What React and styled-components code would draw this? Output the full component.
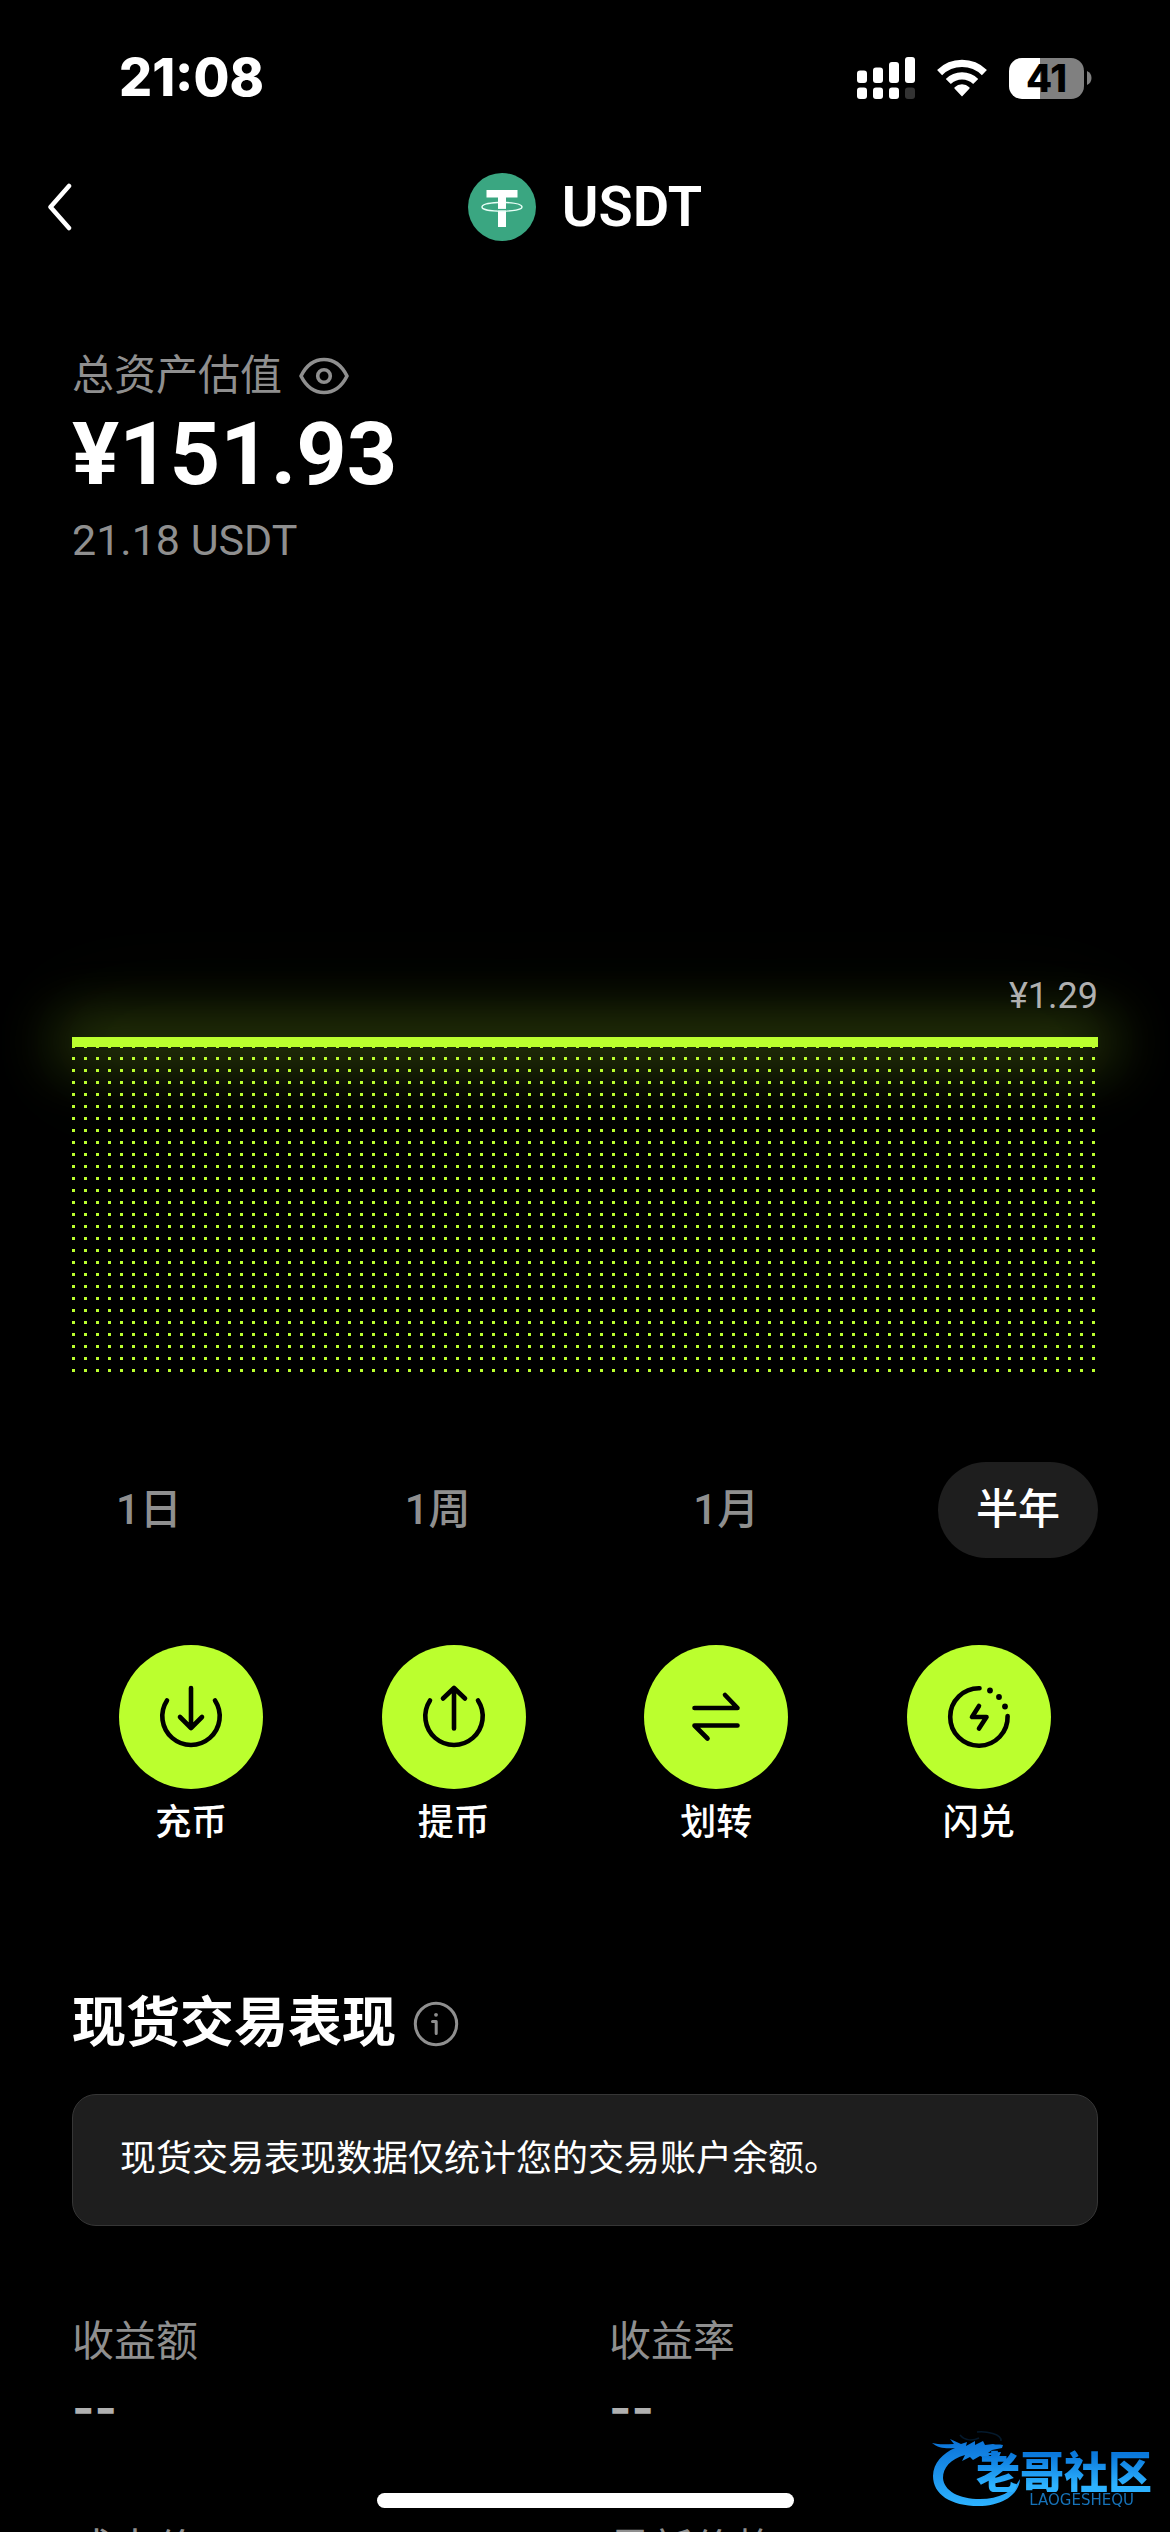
import React, { useState } from "react";
import styled, { createGlobalStyle } from "styled-components";

const LIME = "#bbff2e";
const GREY = "#8f8f8f";

const GlobalStyle = createGlobalStyle`
  * { box-sizing: border-box; }
  body {
    margin: 0;
    background: #000;
    color: #fff;
    font-family: Roboto, "Noto Sans CJK SC", sans-serif;
  }
  button {
    margin: 0;
    padding: 0;
    border: 0;
    background: none;
    color: inherit;
    font: inherit;
    cursor: pointer;
  }
  h1, h2, p, dl, dt, dd { margin: 0; }
  svg { display: block; flex: none; }
`;

const Screen = styled.div`
  height: 100vh;
  overflow: hidden auto;
  scrollbar-width: none;
  background: #000;
`;

const StatusBar = styled.div`
  display: flex;
  align-items: center;
  justify-content: space-between;
  height: 156px;
  padding: 0 78px 0 119px;
`;

const Clock = styled.time`
  font-family: Inter, sans-serif;
  font-size: 52px;
  font-weight: 800;
  line-height: 60px;
`;

const StatusIcons = styled.div`
  display: flex;
  align-items: center;
  gap: 22px;
`;

const Battery = styled.div`
  display: flex;
  align-items: center;
  gap: 3px;
`;

const BatteryLevel = styled.div`
  width: 75px;
  height: 41px;
  border-radius: 13px;
  background: linear-gradient(90deg, #fff 41%, #808080 41%);
  color: #000;
  font-family: Inter, sans-serif;
  font-size: 38px;
  font-weight: 800;
  line-height: 41px;
  text-align: center;
`;

const Header = styled.header`
  display: grid;
  grid-template-columns: 1fr auto 1fr;
  align-items: center;
  height: 102px;
  padding: 0 48px;
`;

const BackButton = styled.button`
  justify-self: start;
`;

const Coin = styled.div`
  display: flex;
  align-items: center;
  gap: 26px;
`;

const CoinName = styled.h1`
  font-size: 56px;
  font-weight: 600;
  line-height: 72px;
`;

const Content = styled.main`
  padding: 90px 72px 0;
`;

const OverviewLabel = styled.div`
  display: flex;
  align-items: center;
  gap: 17px;
  color: ${GREY};
  font-size: 42px;
  line-height: 56px;
`;

const Amount = styled.p`
  font-size: 88px;
  font-weight: 700;
  line-height: 100px;
`;

const SubAmount = styled.p`
  margin-top: 8px;
  color: ${GREY};
  font-size: 43px;
  line-height: 56px;
`;

const Chart = styled.section`
  padding-top: 400px;
`;

const ChartValue = styled.p`
  color: #b0b0b0;
  font-size: 36px;
  line-height: 56px;
  text-align: right;
`;

const ChartLine = styled.div`
  height: 10px;
  margin: 13px 0 -2px;
  background: ${LIME};
  box-shadow:
    0 0 60px 14px rgba(187, 255, 46, 0.3),
    0 0 120px 20px rgba(187, 255, 46, 0.06);
`;

const ChartDots = styled.div`
  height: 327px;
  background-image: conic-gradient(from 0deg at 3px 3px, transparent 75%, ${LIME} 0);
  background-size: 12px 12px;
`;

const Ranges = styled.div`
  display: flex;
  justify-content: space-between;
  margin-top: 90px;
`;

const RangeTab = styled.button`
  height: 96px;
  padding: ${(p) => (p.$active ? "0 38px" : "0 44px")};
  border-radius: 48px;
  background: ${(p) => (p.$active ? "#1e1e1e" : "transparent")};
  color: ${(p) => (p.$active ? "#fff" : GREY)};
  font-size: 42px;
  font-weight: 500;
  line-height: 56px;
`;

const Actions = styled.nav`
  display: grid;
  grid-template-columns: repeat(4, 1fr);
  margin: 87px -12px 0;
`;

const ActionButton = styled.button`
  display: flex;
  flex-direction: column;
  align-items: center;
  gap: 10px;
  font-size: 36px;
  font-weight: 500;
  line-height: 48px;
`;

const ActionCircle = styled.span`
  display: grid;
  place-items: center;
  width: 144px;
  height: 144px;
  border-radius: 50%;
  background: ${LIME};
`;

const SectionHead = styled.div`
  display: flex;
  align-items: center;
  gap: 17px;
  margin-top: 141px;
`;

const SectionTitle = styled.h2`
  font-size: 54px;
  font-weight: 700;
  line-height: 72px;
`;

const Notice = styled.p`
  margin-top: 34px;
  padding: 40px 47px 42px;
  border: 1px solid #363636;
  border-radius: 24px;
  background: #1e1e1e;
  font-size: 36px;
  line-height: 48px;
`;

const Stats = styled.dl`
  display: grid;
  grid-template-columns: 1fr 1fr;
  gap: 82px 48px;
  margin-top: 88px;
`;

const StatLabel = styled.dt`
  color: ${GREY};
  font-size: 42px;
  line-height: 56px;
`;

const StatValue = styled.dd`
  margin-top: 6px;
  color: #b0b0b0;
  font-family: Inter, sans-serif;
  font-size: 48px;
  font-weight: 700;
  line-height: 64px;
`;

const HomeIndicator = styled.div`
  position: fixed;
  bottom: 24px;
  left: 50%;
  width: 417px;
  height: 15px;
  margin-left: -208px;
  border-radius: 8px;
  background: #fff;
`;

const Watermark = styled.div`
  position: fixed;
  right: 18px;
  bottom: 24px;
  display: flex;
  align-items: flex-end;
`;

const WatermarkText = styled.div`
  display: flex;
  flex-direction: column;
  align-items: flex-end;
  margin-left: -46px;
`;

const WatermarkName = styled.span`
  background: linear-gradient(#0a78dc 15%, #2db2ff 85%);
  background-clip: text;
  color: transparent;
  font-family: "Noto Sans CJK SC", sans-serif;
  font-size: 44px;
  font-weight: 900;
  line-height: 44px;
`;

const WatermarkLatin = styled.span`
  padding-right: 18px;
  color: #1672b8;
  font-family: "DejaVu Sans", sans-serif;
  font-size: 15px;
  line-height: 16px;
`;

const SignalIcon = () => (
  <svg width="58" height="42" viewBox="0 0 58 42" fill="#fff" aria-hidden="true">
    <rect x="0" y="13.500" width="10" height="12.500" rx="3" />
    <rect x="16" y="10.500" width="10" height="15.500" rx="3" />
    <rect x="32" y="5" width="10" height="21" rx="3" />
    <rect x="48" y="0" width="10" height="26" rx="3" />
    <rect x="0" y="30.500" width="10" height="11.500" rx="3" />
    <rect x="16" y="30.500" width="10" height="11.500" rx="3" />
    <rect x="32" y="30.500" width="10" height="11.500" rx="3" />
    <rect x="48" y="30.500" width="10" height="11.500" rx="3" fill="#333" />
  </svg>
);

const WifiIcon = () => (
  <svg width="50" height="38" viewBox="0 0 50 38" aria-hidden="true">
    <path d="M25 37.500 L17.700 29.800 A1 1 0 0 1 17.700 28.300 A10.500 10.500 0 0 1 32.300 28.300 A1 1 0 0 1 32.300 29.800 Z" fill="#fff" />
    <path d="M11.300 22.500 A19.500 19.500 0 0 1 38.700 22.500" fill="none" stroke="#fff" strokeWidth="7.200" />
    <path d="M2.600 13.600 A32 32 0 0 1 47.400 13.600" fill="none" stroke="#fff" strokeWidth="7.200" />
  </svg>
);

const BatteryCap = () => (
  <svg width="5" height="14" viewBox="0 0 5 14" aria-hidden="true">
    <path d="M0 0 Q4.500 2 4.500 7 Q4.500 12 0 14 Z" fill="#808080" />
  </svg>
);

const BackIcon = () => (
  <svg width="24" height="50" viewBox="0 0 24 50" fill="none" stroke="#fff" strokeWidth="4.500" strokeLinecap="round" strokeLinejoin="round" aria-hidden="true">
    <path d="M21 4 L2.500 25 L21 46" />
  </svg>
);

const TetherLogo = () => (
  <svg width="68" height="68" viewBox="0 0 68 68" aria-hidden="true">
    <circle cx="34" cy="34" r="34" fill="#3aa681" />
    <rect x="18.500" y="17" width="31" height="7.500" fill="#fff" />
    <rect x="30" y="24" width="8" height="30" fill="#fff" />
    <path d="M30 29.500 C20 30 14 31.800 14 34 C14 36.600 23 38.200 34 38.200 C45 38.200 54 36.600 54 34 C54 31.800 48 30 38 29.500" fill="none" stroke="#e9fff7" strokeWidth="1.400" />
    <path d="M29.500 36.600 H38.500" stroke="#3aa681" strokeWidth="1.400" />
  </svg>
);

const EyeIcon = () => (
  <svg width="50" height="40" viewBox="0 0 50 40" fill="none" stroke={GREY} strokeWidth="3.600" strokeLinejoin="round" aria-hidden="true">
    <path d="M2 20 C7 10 15 3.500 25 3.500 C35 3.500 43 10 48 20 C43 30 35 36.500 25 36.500 C15 36.500 7 30 2 20 Z" />
    <circle cx="25" cy="20" r="6.300" />
  </svg>
);

const InfoIcon = () => (
  <svg width="46" height="46" viewBox="0 0 46 46" fill="none" stroke={GREY} strokeWidth="3" aria-hidden="true">
    <circle cx="23" cy="23" r="20.700" />
    <path d="M19.500 20.500 H23.200 V32.500" strokeLinecap="round" strokeLinejoin="round" />
    <circle cx="23" cy="13.800" r="1.900" fill={GREY} stroke="none" />
  </svg>
);

const ActionIcon = ({ children }) => (
  <svg width="72" height="72" viewBox="0 0 72 72" fill="none" stroke="#000" strokeWidth="4.600" strokeLinecap="round" strokeLinejoin="round" aria-hidden="true">
    {children}
  </svg>
);

const icons = {
  deposit: (
    <ActionIcon>
      <path d="M12 19.500 A28.700 28.700 0 1 0 60 19.500" />
      <path d="M36 7 V46.500 M25 36 L36 47 L47 36" />
    </ActionIcon>
  ),
  withdraw: (
    <ActionIcon>
      <path d="M12 19.500 A28.700 28.700 0 1 0 60 19.500" />
      <path d="M36 47.500 V7.500 M25 17.500 L36 7 L47 17.500" />
    </ActionIcon>
  ),
  transfer: (
    <ActionIcon>
      <path d="M14.500 27 H57.500 L45 14 M57.500 44.500 H14.500 L27.500 57.500" />
    </ActionIcon>
  ),
  swap: (
    <ActionIcon>
      <path d="M36.500 7.300 A28.700 28.700 0 1 0 64.600 35" />
      <path d="M36 25 L29 36 H43.500 L36 47.500" />
      <circle cx="47" cy="9.500" r="2.900" fill="#000" stroke="none" />
      <circle cx="56" cy="16" r="2.900" fill="#000" stroke="none" />
      <circle cx="62" cy="25.500" r="2.900" fill="#000" stroke="none" />
    </ActionIcon>
  ),
};

const DragonLogo = () => (
  <svg width="92" height="78" viewBox="0 0 92 78" aria-hidden="true">
    <defs>
      <linearGradient id="dragon" x1="0" y1="0" x2="0" y2="1">
        <stop offset="0" stopColor="#0a72d8" />
        <stop offset="1" stopColor="#2db2ff" />
      </linearGradient>
    </defs>
    <path
      d="M2 13 C10 15 17 14 24 14 L20 9 L31 14 L37 12 L36 16 L45 11 L45 15 L53 11 L55 15 L63 14 C66 15 69 14 73 15 L72 18 L62 20 L58 23 L71 22 L69 27 L60 25 L55 28 L50 26 L43 30 L40 27 L32 31 L35 25 C20 29 13 38 13 48 C14 61 29 69 50 69 C69 69 83 62 90 49 C89 65 72 75 52 76 C22 77 3 65 3 46 C3 33 13 23 25 18 C16 19 8 18 2 13 Z"
      fill="url(#dragon)"
    />
    <path d="M30 5 C35 11 43 11 49 8 M47 2 C56 1 72 4 71 11" fill="none" stroke="#04192c" strokeWidth="1.500" />
  </svg>
);

const ranges = ["1日", "1周", "1月", "半年"];

const actions = [
  { icon: "deposit", label: "充币" },
  { icon: "withdraw", label: "提币" },
  { icon: "transfer", label: "划转" },
  { icon: "swap", label: "闪兑" },
];

const stats = [
  { label: "收益额", value: "--" },
  { label: "收益率", value: "--" },
  { label: "成本价", value: "--" },
  { label: "最新价格", value: "--" },
];

export default function App() {
  const [range, setRange] = useState("半年");

  return (
    <Screen lang="zh-CN">
      <GlobalStyle />
      <StatusBar>
        <Clock>21:08</Clock>
        <StatusIcons>
          <SignalIcon />
          <WifiIcon />
          <Battery>
            <BatteryLevel>41</BatteryLevel>
            <BatteryCap />
          </Battery>
        </StatusIcons>
      </StatusBar>

      <Header>
        <BackButton type="button" aria-label="返回">
          <BackIcon />
        </BackButton>
        <Coin>
          <TetherLogo />
          <CoinName>USDT</CoinName>
        </Coin>
      </Header>

      <Content>
        <OverviewLabel>
          总资产估值
          <button type="button" aria-label="隐藏金额">
            <EyeIcon />
          </button>
        </OverviewLabel>
        <Amount>¥151.93</Amount>
        <SubAmount>21.18 USDT</SubAmount>

        <Chart>
          <ChartValue>¥1.29</ChartValue>
          <ChartLine />
          <ChartDots />
        </Chart>

        <Ranges>
          {ranges.map((name) => (
            <RangeTab key={name} type="button" $active={name === range} aria-pressed={name === range} onClick={() => setRange(name)}>
              {name}
            </RangeTab>
          ))}
        </Ranges>

        <Actions>
          {actions.map(({ icon, label }) => (
            <ActionButton key={label} type="button">
              <ActionCircle>{icons[icon]}</ActionCircle>
              {label}
            </ActionButton>
          ))}
        </Actions>

        <SectionHead>
          <SectionTitle>现货交易表现</SectionTitle>
          <button type="button" aria-label="说明">
            <InfoIcon />
          </button>
        </SectionHead>
        <Notice>现货交易表现数据仅统计您的交易账户余额。</Notice>

        <Stats>
          {stats.map(({ label, value }) => (
            <div key={label}>
              <StatLabel>{label}</StatLabel>
              <StatValue>{value}</StatValue>
            </div>
          ))}
        </Stats>
      </Content>

      <HomeIndicator />
      <Watermark>
        <DragonLogo />
        <WatermarkText>
          <WatermarkName>老哥社区</WatermarkName>
          <WatermarkLatin>LAOGESHEQU</WatermarkLatin>
        </WatermarkText>
      </Watermark>
    </Screen>
  );
}
